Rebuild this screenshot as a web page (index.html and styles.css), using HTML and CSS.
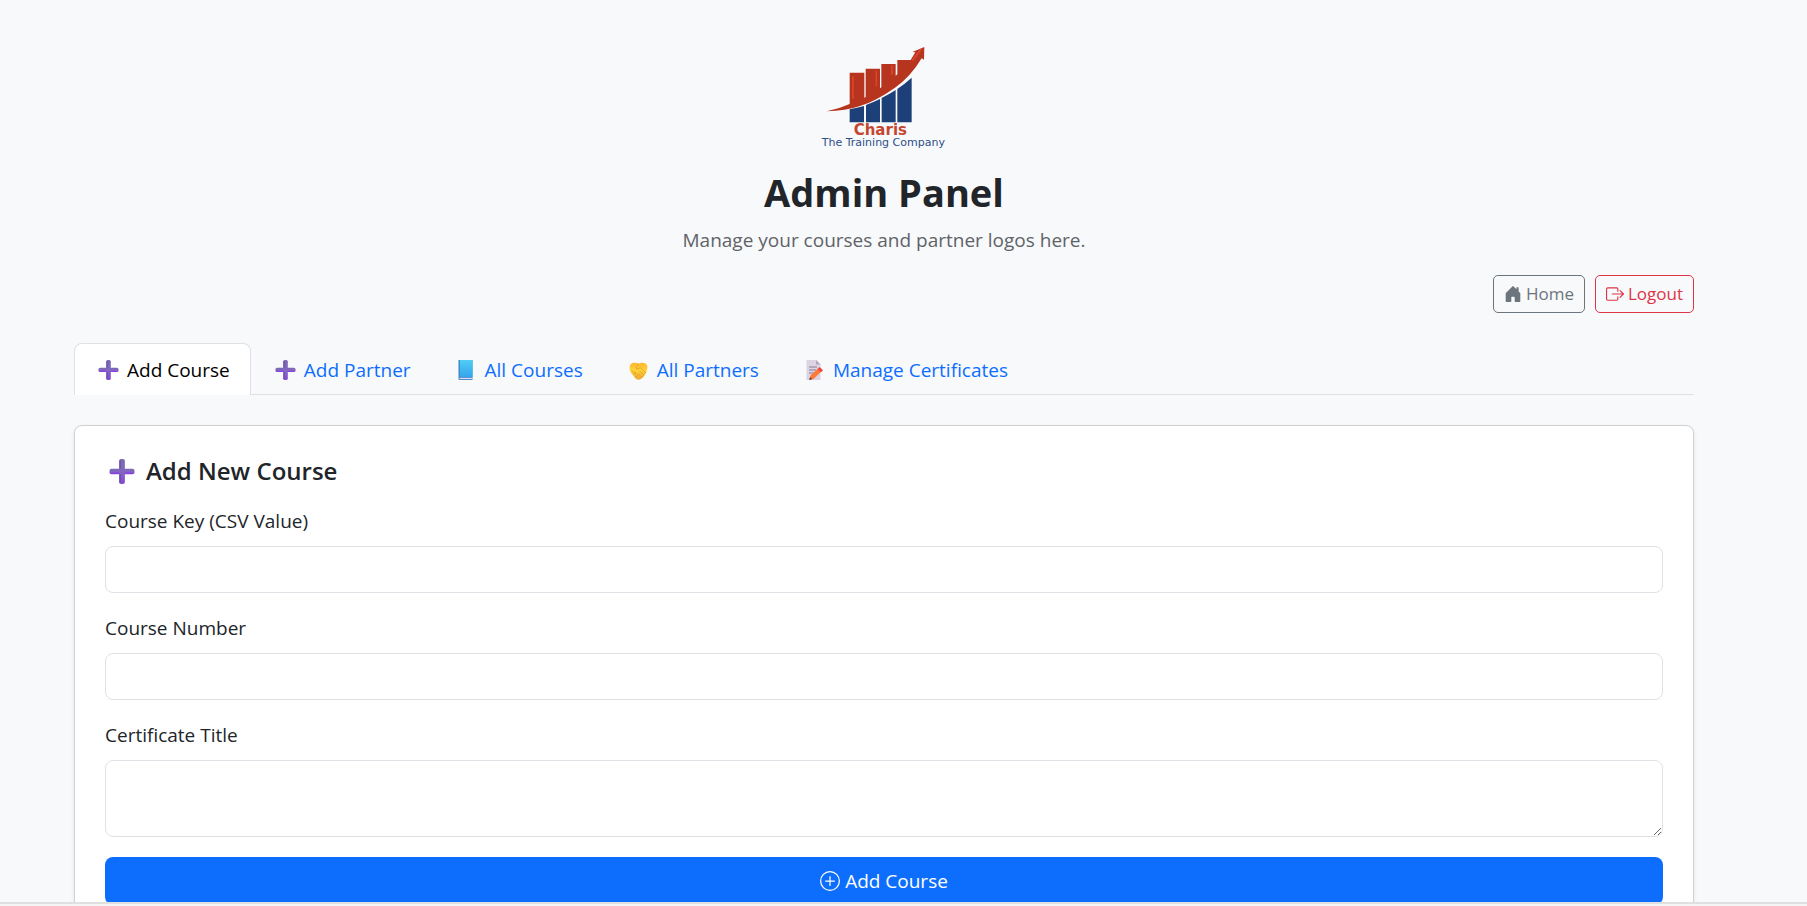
FILE: index.html
```html
<!DOCTYPE html>
<html lang="en">
<head>
    <meta charset="UTF-8">
    <meta name="viewport" content="width=device-width, initial-scale=1.0">
    <title>Admin Panel</title>
    <link rel="stylesheet" href="styles.css">
</head>
<body>
    <!-- shared icons -->
    <svg class="sprite" aria-hidden="true">
        <defs>
            <linearGradient id="plusV" x1="0" y1="0" x2="0" y2="1">
                <stop offset="0" stop-color="#7a68b0"/>
                <stop offset="0.5" stop-color="#8468c0"/>
                <stop offset="1" stop-color="#8648d4"/>
            </linearGradient>
            <linearGradient id="bookBlue" x1="0" y1="0" x2="0" y2="1">
                <stop offset="0" stop-color="#50cdf5"/>
                <stop offset="1" stop-color="#35a5ee"/>
            </linearGradient>
            <linearGradient id="handGold" x1="0" y1="0" x2="0" y2="1">
                <stop offset="0" stop-color="#ffb52e"/>
                <stop offset="0.45" stop-color="#ffd43c"/>
                <stop offset="1" stop-color="#eda52c"/>
            </linearGradient>
        </defs>
        <symbol id="icon-plus" viewBox="0 0 20 20">
            <rect x="0" y="7.7" width="20" height="4.4" rx="1.6" fill="url(#plusV)"/>
            <rect x="7.7" y="0" width="4.6" height="20" rx="1.6" fill="url(#plusV)"/>
            <path d="M8.5 1v6.8M8.5 12v7" stroke="#6550a5" stroke-width="1"/>
            <path d="M1 11.5h6.7M12.3 11.5H19" stroke="#8c3fe0" stroke-width="1"/>
        </symbol>
        <symbol id="icon-book" viewBox="0 0 20 20">
            <path d="M2 0h14v20H3a1 1 0 0 1-1-1z" fill="#3a86c8"/>
            <rect x="3.4" y="0" width="12.6" height="17" fill="url(#bookBlue)"/>
            <rect x="3" y="17.8" width="13" height="1.3" fill="#e8d8f5"/>
        </symbol>
        <symbol id="icon-hands" viewBox="0 0 20 20">
            <path d="M1.500 5C3.500 2.500 6 2.200 10 3.600c4-1.400 6.500-.9 8.500 1.400 1 3 .2 6-1.500 9C15.500 17 13 19 10.500 19.800 7 19.500 6 17 4 14.500 1.500 12.500.5 9 1.500 5z" fill="url(#handGold)"/>
            <path d="M10 4 7.500 8c1 1.500 3 .8 4-.5l6 5.500M11 11l4.500 4M9 13l4 4M3 10l5 5M5 14l2.500-2M7.500 17l2-2" fill="none" stroke="#e09a26" stroke-width=".8"/>
        </symbol>
        <symbol id="icon-memo" viewBox="0 0 20 20">
            <path d="M2 0h9.500L16 4.500V20H2z" fill="#dcd3e3"/>
            <path d="M11.500 0 16 4.500h-4.500z" fill="#b1a5bb"/>
            <path d="M4.500 7h8M4.500 10h7M4.500 13h5" stroke="#887c94" stroke-width="1"/>
            <path d="m5 19.800 1-4.300 7.500-7 3.200 3.300L9 19z" fill="#ff7a37"/>
            <path d="m13 9 2.200-2 3.300 3.300-2 2z" fill="#f4433f"/>
            <path d="m4.700 20 .8-3 2.200 2.300z" fill="#65434b"/>
        </symbol>
    </svg>

    <main class="container">
        <header class="page-header">
            <svg class="logo" viewBox="0 0 504 390" role="img" aria-label="Charis The Training Company">
                <g fill="#1d4078">
                    <path d="M149 238q22-4 43-10v49h-43z"/>
                    <path d="M198 225q21-8 42-18v70h-42z"/>
                    <path d="M245 204q22-11 42-24v97h-42z"/>
                    <path d="M292 177q22-15 43-34v134h-43z"/>
                </g>
                <path d="M80 244q38-8 69-22v-94h44v75l4-2v-85h43v59l4-3v-70h43v35l5-4V90h40l14-23-9-1 36-15-1 38-7-4q-35 58-80 88-60 42-105 55-43 15-100 16z" fill="#b7351e"/>
                <path d="M159 139v68M229 122v47M276 107v27M337 93l26-35" fill="none" stroke="#dc452b" stroke-width="5"/>
                <text class="logo-name" x="241" y="314" text-anchor="middle">Charis</text>
                <text class="logo-tagline" x="250" y="348" text-anchor="middle">The Training Company</text>
            </svg>
            <h1>Admin Panel</h1>
            <p>Manage your courses and partner logos here.</p>
        </header>

        <div class="actions">
            <a class="btn-sm btn-home" href="#">
                <svg viewBox="0 0 16 16" fill="currentColor" aria-hidden="true"><path d="M6.500 14.500v-3.505c0-.245.25-.495.5-.495h2c.25 0 .5.25.5.5v3.500a.5.5 0 0 0 .5.5h4a.5.5 0 0 0 .5-.5v-7a.5.5 0 0 0-.146-.354L13 5.793V2.500a.5.5 0 0 0-.5-.5h-1a.5.5 0 0 0-.5.5v1.293L8.354 1.146a.5.5 0 0 0-.708 0l-6 6A.5.5 0 0 0 1.500 7.500v7a.5.5 0 0 0 .5.5h4a.5.5 0 0 0 .5-.5z"/></svg>
                Home
            </a>
            <a class="btn-sm btn-logout" href="#">
                <svg viewBox="0 0 16 16" fill="currentColor" aria-hidden="true"><path fill-rule="evenodd" d="M10 12.500a.5.5 0 0 1-.5.5h-8a.5.5 0 0 1-.5-.5v-9a.5.5 0 0 1 .5-.5h8a.5.5 0 0 1 .5.5v2a.5.5 0 0 0 1 0v-2A1.500 1.500 0 0 0 9.500 2h-8A1.500 1.500 0 0 0 0 3.500v9A1.500 1.500 0 0 0 1.500 14h8a1.500 1.500 0 0 0 1.500-1.500v-2a.5.5 0 0 0-1 0z"/><path fill-rule="evenodd" d="M15.854 8.354a.5.5 0 0 0 0-.708l-3-3a.5.5 0 0 0-.708.708L14.293 7.500H5.500a.5.5 0 0 0 0 1h8.793l-2.147 2.146a.5.5 0 0 0 .708.708z"/></svg>
                Logout
            </a>
        </div>

        <div class="tabs" role="tablist">
            <button type="button" class="tab active" role="tab" aria-selected="true"><svg class="emoji" aria-hidden="true"><use href="#icon-plus"/></svg>Add Course</button>
            <button type="button" class="tab" role="tab"><svg class="emoji" aria-hidden="true"><use href="#icon-plus"/></svg>Add Partner</button>
            <button type="button" class="tab" role="tab"><svg class="emoji" aria-hidden="true"><use href="#icon-book"/></svg>All Courses</button>
            <button type="button" class="tab" role="tab"><svg class="emoji" aria-hidden="true"><use href="#icon-hands"/></svg>All Partners</button>
            <button type="button" class="tab" role="tab"><svg class="emoji" aria-hidden="true"><use href="#icon-memo"/></svg>Manage Certificates</button>
        </div>

        <section class="card">
            <h2><svg class="emoji-lg" aria-hidden="true"><use href="#icon-plus"/></svg>Add New Course</h2>
            <form>
                <div class="field">
                    <label for="courseKey">Course Key (CSV Value)</label>
                    <input type="text" id="courseKey" name="courseKey">
                </div>
                <div class="field">
                    <label for="courseNumber">Course Number</label>
                    <input type="text" id="courseNumber" name="courseNumber">
                </div>
                <div class="field">
                    <label for="certificateTitle">Certificate Title</label>
                    <textarea id="certificateTitle" name="certificateTitle" rows="2"></textarea>
                </div>
                <button type="submit" class="btn-primary">
                    <svg viewBox="0 0 16 16" fill="currentColor" aria-hidden="true"><path d="M8 15A7 7 0 1 1 8 1a7 7 0 0 1 0 14m0 1A8 8 0 1 0 8 0a8 8 0 0 0 0 16"/><path d="M8 4a.5.5 0 0 1 .5.5v3h3a.5.5 0 0 1 0 1h-3v3a.5.5 0 0 1-1 0v-3h-3a.5.5 0 0 1 0-1h3v-3A.5.5 0 0 1 8 4"/></svg>
                    Add Course
                </button>
            </form>
        </section>
    </main>

    <div class="bottom-bar"></div>
</body>
</html>
```

FILE: styles.css
```css
* {
    box-sizing: border-box;
}
body {
    margin: 0;
    padding-right: 39px;
    height: 100vh;
    overflow: hidden;
    font-family: 'Segoe UI', 'Open Sans', 'Noto Sans', sans-serif;
    font-size: 19px;
    line-height: 30px;
    background-color: #f8f9fb;
    color: #212529;
}
.sprite {
    position: absolute;
    width: 0;
    height: 0;
}
.container {
    max-width: 1650px;
    margin: 0 auto;
    padding: 30px 15px;
}
.page-header {
    display: flex;
    flex-direction: column;
    align-items: center;
    margin-bottom: 20px;
}
.logo {
    width: 168px;
    height: 130px;
    margin-bottom: 7px;
}
.logo-name {
    font-family: 'DejaVu Sans', sans-serif;
    font-size: 45px;
    font-weight: 700;
    fill: #c5462f;
}
.logo-tagline {
    font-family: 'DejaVu Sans', sans-serif;
    font-size: 33px;
    fill: #2c4f8a;
}
h1 {
    margin: 0 0 8px;
    font-size: 38px;
    line-height: 50px;
    font-weight: 700;
}
.page-header p {
    margin: 0;
    color: #5f6368;
}
.actions {
    display: flex;
    justify-content: flex-end;
    gap: 10px;
    margin-bottom: 30px;
}
.btn-sm {
    display: flex;
    align-items: center;
    gap: 4px;
    height: 38px;
    padding: 0 10px;
    border: 1px solid;
    border-radius: 5px;
    font-size: 17px;
    text-decoration: none;
}
.btn-sm svg {
    width: 18px;
    height: 18px;
}
.btn-home {
    color: #6c757d;
}
.btn-logout {
    color: #dc3545;
}
.tabs {
    display: flex;
    margin-bottom: 30px;
    box-shadow: inset 0 -1px #dee2e6;
}
.tab {
    display: flex;
    align-items: center;
    gap: 5px;
    height: 52px;
    padding: 0 20px;
    border: 1px solid transparent;
    border-bottom: none;
    border-radius: 8px 8px 0 0;
    background: none;
    color: #0d6efd;
    font: inherit;
    cursor: pointer;
}
.tab.active {
    color: #000;
    background-color: #fff;
    border-color: #dee2e6;
}
.emoji {
    width: 27px;
    height: 20px;
}
.card {
    padding: 30px;
    background-color: #fff;
    border: 1px solid #cfd1d4;
    border-radius: 8px;
    box-shadow: 0 2px 5px rgba(0, 0, 0, 0.08);
}
.card h2 {
    display: flex;
    align-items: center;
    gap: 7px;
    margin: 0 0 20px;
    font-size: 24px;
    line-height: 30px;
    font-weight: 600;
}
.emoji-lg {
    width: 34px;
    height: 25px;
}
.field {
    margin-bottom: 20px;
}
.field label {
    display: block;
    margin-bottom: 10px;
}
.field input,
.field textarea {
    display: block;
    width: 100%;
    height: 47px;
    padding: 8px 15px;
    border: 1px solid #dee2e6;
    border-radius: 8px;
    background-color: #fff;
    color: inherit;
    font: inherit;
}
.field textarea {
    height: 77px;
    resize: vertical;
}
.btn-primary {
    display: flex;
    align-items: center;
    justify-content: center;
    gap: 5px;
    width: 100%;
    height: 48px;
    border: none;
    border-radius: 8px;
    background-color: #0d6efd;
    color: #fff;
    font: inherit;
    cursor: pointer;
}
.btn-primary svg {
    width: 20px;
    height: 20px;
}
.bottom-bar {
    position: fixed;
    left: 0;
    right: 0;
    bottom: 0;
    height: 4px;
    background-color: #f5f5f5;
    border-top: 2px solid #e0e0e0;
}
```
